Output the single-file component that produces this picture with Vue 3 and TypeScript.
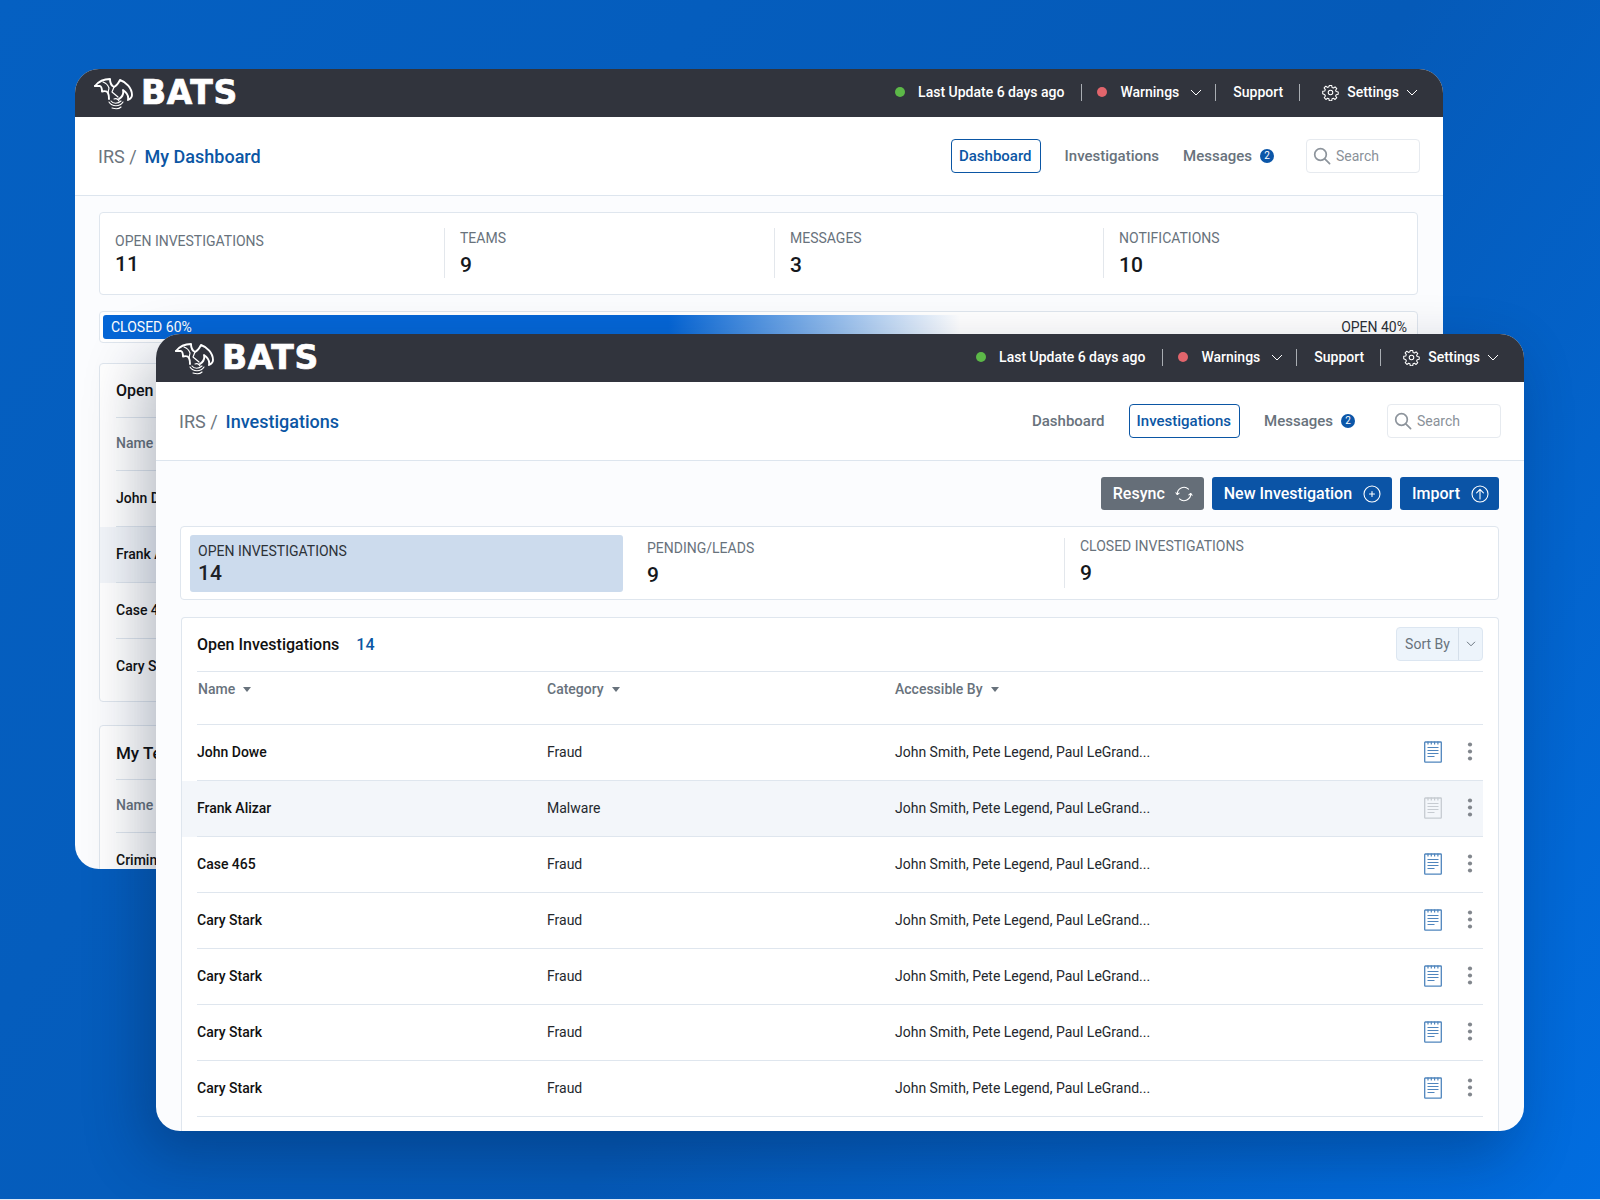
<script setup lang="ts">
interface Win {
  id: string
  title: string
  active: string
}
const windows: Win[] = [
  { id: 'dash', title: 'My Dashboard', active: 'Dashboard' },
  { id: 'inv', title: 'Investigations', active: 'Investigations' },
]
const navItems = ['Dashboard', 'Investigations']

const dashStats = [
  { label: 'TEAMS', value: '9' },
  { label: 'MESSAGES', value: '3' },
  { label: 'NOTIFICATIONS', value: '10' },
]
const dashRows = ['John Dowe', 'Frank Alizar', 'Case 465', 'Cary Stark']

const rows = [
  { name: 'John Dowe', cat: 'Fraud' },
  { name: 'Frank Alizar', cat: 'Malware' },
  { name: 'Case 465', cat: 'Fraud' },
  { name: 'Cary Stark', cat: 'Fraud' },
  { name: 'Cary Stark', cat: 'Fraud' },
  { name: 'Cary Stark', cat: 'Fraud' },
  { name: 'Cary Stark', cat: 'Fraud' },
]
const people = 'John Smith, Pete Legend, Paul LeGrand...'
</script>

<template>
  <div class="canvas">
    <section v-for="w in windows" :key="w.id" class="win" :class="w.id">
      <header class="top">
        <div class="logo">
          <svg class="bat" width="40" height="33" viewBox="0 0 40 33" fill="none" stroke="#fff" stroke-width="1.9" stroke-linejoin="round" stroke-linecap="round">
            <path d="M1 9 C5 4 10 2 16 2 C16 6 18 9 20 10 C22 9 24 7 26 3 C32 5 38 11 38 18 C38 20 36 22 34 23 C35 18 32 15 29 13 C30 17 28 20 25 22" />
            <path d="M1 9 L6 9 C8 10 8 13 8 14.5 C10 14 13 14 14 16 C15 18 15 20 15 22" />
            <path stroke-width="1.2" d="M9 5 C12 6 14 8 15 11 L14 16" />
            <path stroke-width="1.2" d="M20 10 L18 15 L24 20" />
            <path stroke-width="1.1" d="M20 22 C22 21 24 22 25 24" />
            <path stroke-width="1.1" d="M17 24 C19 27 24 27 27 24" />
            <path stroke-width="1.1" d="M15 25 C18 30 26 30 29 25" />
            <path stroke-width="1.1" d="M18 31 C21 32 25 32 27 30" />
          </svg>
          <span class="brand">BATS</span>
        </div>
        <div class="status">
          <span class="dot green"></span>
          <span class="t-item">Last Update 6 days ago</span>
          <i class="vsep s1"></i>
          <span class="dot red"></span>
          <span class="t-item">Warnings</span>
          <svg class="chev" width="12" height="7" viewBox="0 0 12 7" fill="none" stroke="#fff" stroke-width="1"><path d="M1 1l5 5 5-5" /></svg>
          <i class="vsep s2"></i>
          <span class="t-item">Support</span>
          <i class="vsep s3"></i>
          <svg class="gear" width="17" height="17" viewBox="0 0 24 24" fill="none" stroke="#fff" stroke-width="1.5" stroke-linejoin="round"><circle cx="12" cy="12" r="3.2" /><path d="M10.3 2h3.4l.5 2.9 1.9.8 2.4-1.7 2.4 2.4-1.7 2.4.8 1.9 2.9.5v3.4l-2.9.5-.8 1.9 1.7 2.4-2.4 2.4-2.4-1.7-1.9.8-.5 2.9h-3.4l-.5-2.9-1.9-.8-2.4 1.7-2.4-2.4 1.7-2.4-.8-1.9L1 13.7v-3.4l2.9-.5.8-1.9L3 5.5l2.4-2.4 2.4 1.7 1.9-.8z" /></svg>
          <span class="t-item">Settings</span>
          <svg class="chev end" width="12" height="7" viewBox="0 0 12 7" fill="none" stroke="#fff" stroke-width="1"><path d="M1 1l5 5 5-5" /></svg>
        </div>
      </header>

      <div class="sub">
        <div class="crumbs"><span class="irs">IRS /</span><span class="cur">{{ w.title }}</span></div>
        <nav class="nav">
          <a v-for="n in navItems" :key="n" class="nav-item" :class="{ on: n === w.active }">{{ n }}</a>
          <a class="nav-item msg">Messages<b class="badge">2</b></a>
          <div class="search">
            <svg width="18" height="18" viewBox="0 0 18 18" fill="none" stroke="#8d949c" stroke-width="1.7" stroke-linecap="round"><circle cx="7.5" cy="7.5" r="5.8" /><path d="M11.8 11.8L16.6 16.6" /></svg>
            <span>Search</span>
          </div>
        </nav>
      </div>

      <div v-if="w.id === 'dash'" class="body">
        <div class="card stats dash-stats">
          <div class="stat first">
            <span class="lab">OPEN INVESTIGATIONS</span>
            <span class="val">11</span>
          </div>
          <div v-for="s in dashStats" :key="s.label" class="stat div">
            <span class="lab">{{ s.label }}</span>
            <span class="val">{{ s.value }}</span>
          </div>
        </div>
        <div class="card progress">
          <div class="fill">CLOSED 60%</div>
          <span class="open">OPEN 40%</span>
        </div>
        <div class="card dash-table">
          <h3 class="d-title">Open Investigations</h3>
          <div class="d-head">Name</div>
          <div v-for="(r, i) in dashRows" :key="i" class="d-wrap" :class="{ hl: i === 1 }">
            <div class="d-row">{{ r }}</div>
          </div>
        </div>
        <div class="card dash-table team">
          <h3 class="d-title big">My Teams</h3>
          <div class="d-head">Name</div>
          <div class="d-wrap"><div class="d-row">Criminal</div></div>
        </div>
      </div>

      <div v-else class="body">
        <div class="actions">
          <button class="btn gray">Resync
            <svg width="18" height="18" viewBox="0 0 20 20" fill="none" stroke="#fff" stroke-width="1.2" stroke-linecap="round" stroke-linejoin="round"><path d="M2.6 10.5A7.4 7.4 0 0 1 15 4.6" /><path d="M17.4 9.5A7.4 7.4 0 0 1 5 15.4" /><path d="M1 8.6l1.6 2 2-1.6" /><path d="M19 11.4l-1.6-2-2 1.6" /></svg>
          </button>
          <button class="btn">New Investigation
            <svg width="18" height="18" viewBox="0 0 18 18" fill="none" stroke="#fff" stroke-width="1.1" stroke-linecap="round"><circle cx="9" cy="9" r="8" /><path d="M9 6.5v5M6.5 9h5" /></svg>
          </button>
          <button class="btn imp">Import
            <svg width="18" height="18" viewBox="0 0 18 18" fill="none" stroke="#fff" stroke-width="1.1" stroke-linecap="round" stroke-linejoin="round"><circle cx="9" cy="9" r="8" /><path d="M9 14V4.5M5.6 7.8L9 4.4l3.4 3.4" /></svg>
          </button>
        </div>
        <div class="card stats inv-stats">
          <div class="stat active">
            <span class="lab">OPEN INVESTIGATIONS</span>
            <span class="val">14</span>
          </div>
          <div class="stat plain">
            <span class="lab">PENDING/LEADS</span>
            <span class="val">9</span>
          </div>
          <div class="stat div">
            <span class="lab">CLOSED INVESTIGATIONS</span>
            <span class="val">9</span>
          </div>
        </div>
        <div class="card table">
          <div class="t-title">
            <h3>Open Investigations</h3>
            <span class="count">14</span>
            <div class="sort">
              <span>Sort By</span>
              <i>
                <svg width="10" height="6" viewBox="0 0 10 6" fill="none" stroke="#6b7680" stroke-width="1"><path d="M1 .8l4 4 4-4" /></svg>
              </i>
            </div>
          </div>
          <div class="grid head">
            <span>Name<em class="caret"></em></span>
            <span>Category<em class="caret"></em></span>
            <span>Accessible By<em class="caret"></em></span>
          </div>
          <div v-for="(r, i) in rows" :key="i" class="row-wrap" :class="{ hl: i === 1 }">
            <div class="grid row">
              <span class="nm">{{ r.name }}</span>
              <span>{{ r.cat }}</span>
              <span>{{ people }}</span>
              <div class="acts">
                <svg class="doc" width="18" height="22" viewBox="0 0 18 22" fill="none" stroke="currentColor" stroke-width="1.1">
                  <rect x=".7" y="1" width="16.6" height="20.2" rx=".6" stroke-width="1.3" />
                  <path d="M4 .6v3M7.3 .6v3M10.6 .6v3M13.9 .6v3" stroke-width="1.2" />
                  <path d="M3.5 6.5h11M3.5 9.5h11M3.5 12.5h11M3.5 15.5h7" />
                </svg>
                <svg class="dots" width="6" height="19" viewBox="0 0 6 19" fill="#82878d"><circle cx="3" cy="2.5" r="2.1" /><circle cx="3" cy="9.5" r="2.1" /><circle cx="3" cy="16.5" r="2.1" /></svg>
              </div>
            </div>
          </div>
        </div>
      </div>
    </section>
  </div>
</template>

<style>
html, body { margin: 0; background: #dfe9f6; }
</style>

<style scoped>
.canvas {
  position: relative;
  width: 1600px;
  height: 1199px;
  overflow: hidden;
  font-family: Roboto, "Liberation Sans", sans-serif;
  background: linear-gradient(125deg, #0560c2 0%, #055ab8 58%, #016de0 100%);
}
.win {
  position: absolute;
  width: 1368px;
  border-radius: 24px;
  overflow: hidden;
  display: flex;
  flex-direction: column;
  background: #fbfcfe;
}
.win.dash { left: 75px; top: 69px; height: 800px; }
.win.inv {
  left: 156px;
  top: 334px;
  height: 797px;
  box-shadow: -12px 24px 60px rgba(0, 20, 50, 0.3);
}
.top {
  flex: 0 0 48px;
  box-sizing: border-box;
  height: 48px;
  background: #31343d;
  display: flex;
  align-items: center;
  justify-content: space-between;
  padding: 0 25px 2px 19px;
  color: #fff;
}
.logo { display: flex; align-items: center; gap: 7px; }
.bat { margin-top: 2px; }
.brand {
  font-family: "DejaVu Sans", sans-serif;
  font-weight: 700;
  font-size: 33px;
  line-height: 1;
  letter-spacing: 0.6px;
  -webkit-text-stroke: 0.7px #fff;
}
.status { display: flex; align-items: center; }
.t-item { font-size: 14px; font-weight: 500; line-height: 16px; }
.dot { width: 10px; height: 10px; border-radius: 50%; }
.dot.green { background: #5cb848; margin-right: 13px; }
.dot.red { background: #e2656c; margin-right: 13px; }
.vsep { width: 1px; height: 17px; background: #a9adb3; }
.vsep.s1 { margin: 0 15px 0 17px; }
.vsep.s2 { margin: 0 17px 0 13px; }
.vsep.s3 { margin: 0 16px; }
.chev { margin-left: 11px; flex: none; }
.chev.end { margin-left: 7px; }
.gear { margin-left: 6px; margin-right: 8px; }

.sub {
  flex: 0 0 79px;
  box-sizing: border-box;
  height: 79px;
  background: #fff;
  border-bottom: 1px solid #dde5ee;
  display: flex;
  align-items: center;
  justify-content: space-between;
  padding: 0 23px;
}
.crumbs { font-size: 18px; display: flex; gap: 8px; }
.irs { color: #6c757d; }
.cur { color: #0b56a4; font-weight: 500; }
.nav { display: flex; align-items: center; gap: 24px; font-size: 15px; font-weight: 500; color: #68727c; }
.nav-item { display: flex; align-items: center; height: 34px; }
.nav-item.on {
  box-sizing: border-box;
  padding: 0 8px 0 7px;
  border: 1px solid #0b56a4;
  border-radius: 4px;
  color: #0b56a4;
}
.badge {
  width: 14px;
  height: 14px;
  margin-left: 8px;
  border-radius: 50%;
  background: #0b56a8;
  color: #fff;
  font-size: 10px;
  font-weight: 400;
  line-height: 14px;
  text-align: center;
}
.search {
  box-sizing: border-box;
  width: 114px;
  height: 34px;
  margin-left: 8px;
  padding-left: 6px;
  display: flex;
  align-items: center;
  gap: 5px;
  border: 1px solid #e6eaef;
  border-radius: 4px;
  color: #8a9199;
  font-size: 14px;
  font-weight: 400;
}

.body { flex: 1; min-height: 0; padding: 16px 25px 0 24px; display: flex; flex-direction: column; }
.card { box-sizing: border-box; background: #fff; border: 1px solid #dfe6ee; border-radius: 4px; flex: none; }
.stats { display: grid; }
.stat { display: flex; flex-direction: column; }
.lab { font-size: 14px; line-height: 16px; color: #68727c; }
.val { font-size: 21px; line-height: 24px; font-weight: 500; color: #15181c; }
.dash-stats { height: 83px; grid-template-columns: 344px 330px 329px 1fr; padding-top: 15px; }
.dash-stats .stat { height: 50px; box-sizing: border-box; }
.stat.first { padding-left: 15px; padding-top: 5px; }
.stat.first .val { margin-top: 3px; }
.stat.div { border-left: 1px solid #e3e7ec; padding-left: 15px; padding-top: 2px; }
.stat.div .val { margin-top: 7px; }

.progress {
  height: 32px;
  margin-top: 16px;
  padding: 3px;
  position: relative;
  overflow: hidden;
}
.fill {
  width: 857px;
  height: 24px;
  padding-left: 8px;
  box-sizing: border-box;
  border-radius: 3px 0 0 3px;
  background: linear-gradient(90deg, #0566d6 0%, #0566d6 66%, #ffffff 100%);
  color: #fff;
  font-size: 14px;
  line-height: 24px;
}
.open { position: absolute; right: 10px; top: 3px; line-height: 24px; font-size: 14px; color: #2c3036; }

.dash-table { margin-top: 20px; padding: 0 16px; height: 339px; }
.dash-table.team { margin-top: 23px; height: 300px; }
.d-title { margin: 0; height: 54px; line-height: 54px; font-size: 16px; font-weight: 500; color: #111; border-bottom: 1px solid #dfe6ee; box-sizing: border-box; }
.d-title.big { font-size: 17px; }
.d-head { height: 53px; line-height: 50px; font-size: 14px; font-weight: 500; color: #68727c; box-sizing: border-box; border-bottom: 1px solid #dfe6ee; }
.d-wrap { margin: 0 -16px; padding: 0 16px; }
.d-wrap.hl { background: #f3f6fa; }
.d-row { height: 56px; line-height: 54px; font-size: 14px; font-weight: 500; color: #111; box-sizing: border-box; border-bottom: 1px solid #dfe6ee; }
.d-wrap:last-child .d-row { border-bottom: 0; }

.actions { display: flex; justify-content: flex-end; gap: 8px; height: 33px; flex: none; }
.btn {
  box-sizing: border-box;
  height: 33px;
  padding: 0 11px 0 12px;
  border: 0;
  border-radius: 3px;
  background: #0b54a6;
  color: #fff;
  font: 500 16px Roboto, sans-serif;
  display: flex;
  align-items: center;
  gap: 11px;
}
.btn.gray { background: #656e78; gap: 10px; }
.btn.imp { padding-right: 10px; }
.inv-stats {
  height: 74px;
  margin-top: 16px;
  padding: 8px 9px;
  grid-template-columns: 433px 441px 1fr;
}
.stat.active {
  background: #ccdbed;
  border-radius: 3px;
  padding: 8px 8px 0;
  height: 57px;
  box-sizing: border-box;
}
.stat.active .lab { color: #2c3238; }
.stat.active .val { margin-top: 2px; color: #1d2126; }
.stat.plain { padding-left: 24px; padding-top: 5px; }
.stat.plain .val { margin-top: 7px; }
.inv-stats .stat.div { padding-left: 15px; padding-top: 0; height: 50px; margin-top: 3px; box-sizing: border-box; }

.table { margin: 17px 0 0 1px; padding: 0 15px; flex: 1; border-bottom: 0; border-radius: 4px 4px 0 0; }
.t-title { display: flex; align-items: center; height: 54px; padding-bottom: 1px; border-bottom: 1px solid #dfe6ee; box-sizing: border-box; }
.t-title h3 { margin: 0; font-size: 16px; font-weight: 500; color: #111; }
.count { margin-left: 17px; font-size: 16px; font-weight: 500; color: #0b56a4; }
.sort {
  margin-left: auto;
  width: 87px;
  height: 34px;
  box-sizing: border-box;
  display: flex;
  align-items: center;
  background: #edf4fb;
  border: 1px solid #dce6f1;
  border-radius: 4px;
  font-size: 14px;
  color: #68727c;
}
.sort span { flex: 1; text-align: center; }
.sort i { width: 23px; height: 100%; border-left: 1px solid #d5dfea; display: flex; align-items: center; justify-content: center; }
.grid { display: grid; grid-template-columns: 350px 348px 1fr auto; font-size: 14px; box-sizing: border-box; border-bottom: 1px solid #dfe6ee; }
.head { height: 53px; padding-top: 9px; padding-left: 1px; grid-template-columns: 349px 348px 1fr; line-height: 16px; font-weight: 500; color: #68727c; }
.caret { display: inline-block; margin-left: 8px; vertical-align: 2px; border: 4.5px solid transparent; border-top: 5px solid #68727c; border-bottom: 0; }
.row-wrap { margin-left: -15px; padding-left: 15px; }
.row-wrap.hl { background: #f3f6fa; }
.row { height: 56px; padding-bottom: 2px; align-items: center; color: #24282d; }
.nm { font-weight: 500; color: #111; }
.acts { display: flex; align-items: center; gap: 25px; padding-right: 10px; }
.doc { color: #4f85bd; }
.row-wrap.hl .doc { color: #c6cbd1; }
</style>
